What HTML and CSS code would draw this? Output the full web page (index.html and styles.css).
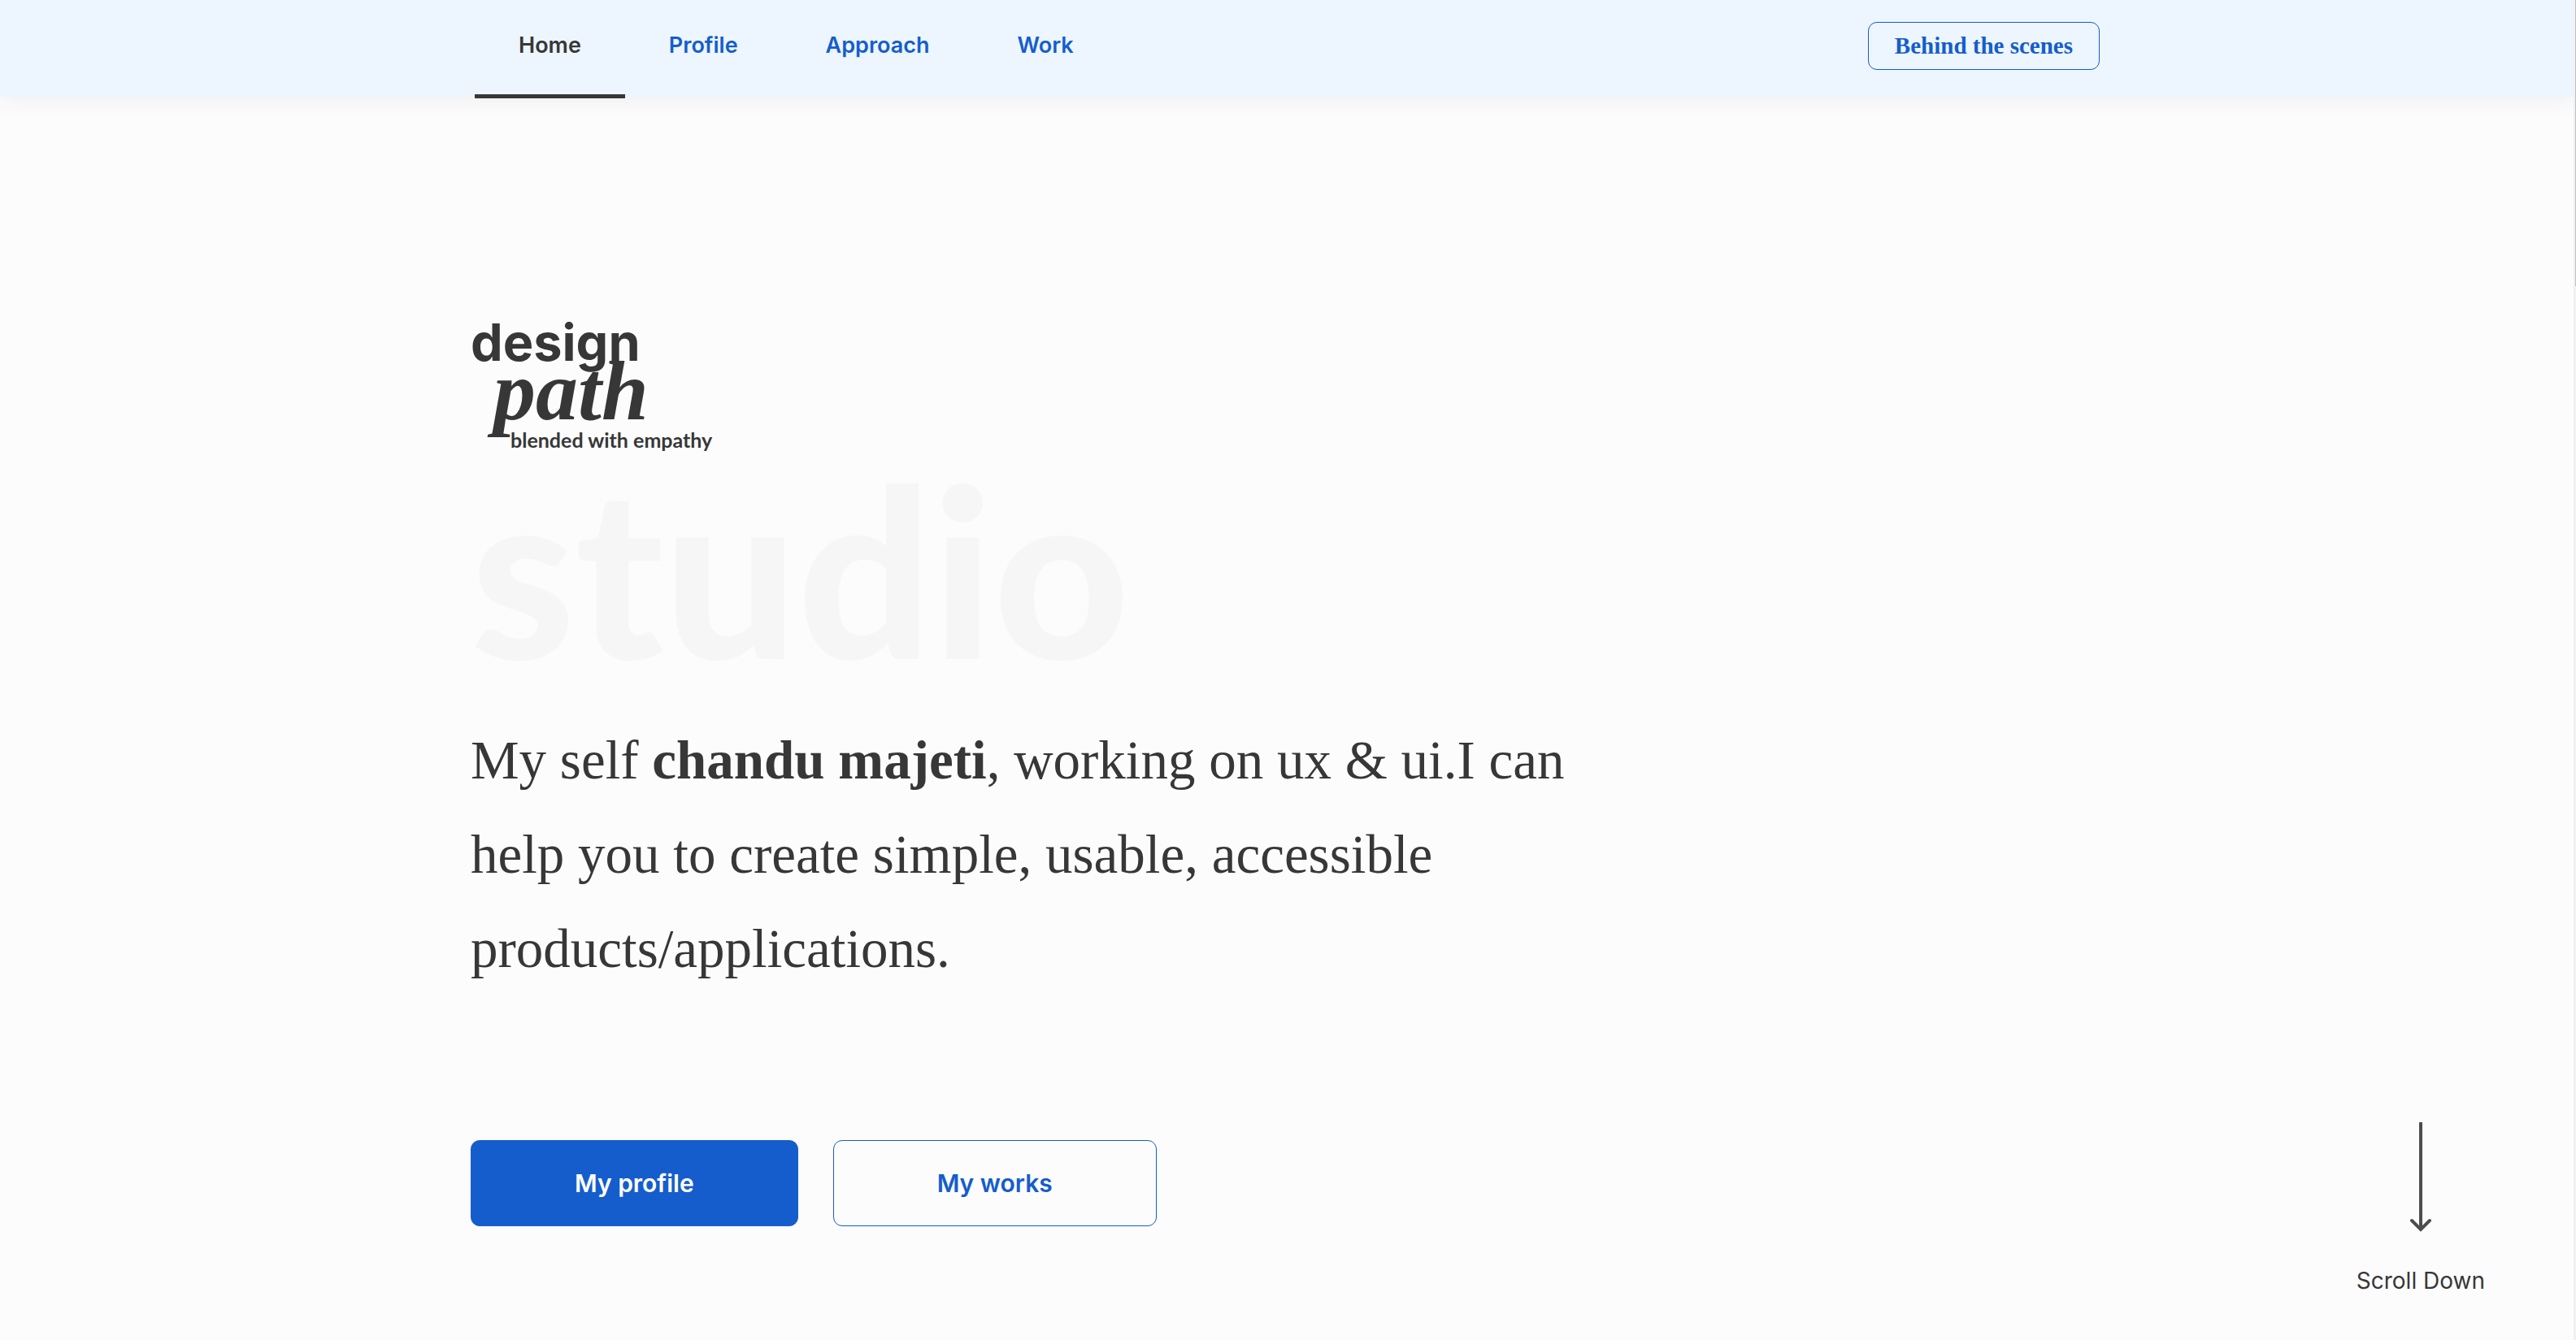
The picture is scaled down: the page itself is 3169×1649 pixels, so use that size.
FILE: index.html
```html
<!DOCTYPE html>
<html lang="en">
<head>
<meta charset="utf-8">
<meta name="viewport" content="width=device-width, initial-scale=1">
<title>Design path studio</title>
<link rel="stylesheet" href="styles.css">
</head>
<body>
<header class="site-header">
  <div class="header-inner">
    <nav class="nav" aria-label="Main">
      <a class="nav-link active" href="#home" aria-current="page">Home</a>
      <a class="nav-link" href="#profile">Profile</a>
      <a class="nav-link" href="#approach">Approach</a>
      <a class="nav-link" href="#work">Work</a>
    </nav>
    <button class="btn-scenes" type="button">Behind the scenes</button>
  </div>
</header>
<main class="hero" id="home">
  <div class="hero-content">
    <svg class="logo" viewBox="0 0 304 176" role="img" aria-label="design path, blended with empathy">
      <text class="logo-design" x="0" y="59">design</text>
      <text class="logo-path" x="28" y="131">path</text>
      <text class="logo-tag" x="49" y="166">blended with empathy</text>
    </svg>
    <div class="studio">studio</div>
    <p class="intro">My self <strong>chandu majeti</strong>, working on ux &amp; ui.I can help you to create simple, usable, accessible products/applications.</p>
    <div class="actions">
      <a class="btn btn-primary" href="#profile">My profile</a>
      <a class="btn btn-outline" href="#work">My works</a>
    </div>
  </div>
  <a class="scroll-down" href="#profile">
    <svg class="arrow" viewBox="0 0 28 136" aria-hidden="true"><path d="M14 1V132M3 121L14 132L25 121"/></svg>
    <span>Scroll Down</span>
  </a>
</main>
<div class="scroll-track" aria-hidden="true"><div class="scroll-thumb"></div></div>
</body>
</html>
```
FILE: styles.css
```css
* { box-sizing: border-box; }

body {
  margin: 0;
  padding-right: 3px;
  background: #fcfcfc;
  color: #373737;
  font-family: Inter, "Liberation Sans", sans-serif;
  font-size: 27px;
}

a { text-decoration: none; }

.site-header {
  height: 119px;
  padding-right: 4px;
  background: #edf5ff;
  box-shadow: 0 4px 28px rgba(0, 0, 0, 0.06);
}

.header-inner {
  display: flex;
  justify-content: space-between;
  align-items: flex-start;
  max-width: 2004px;
  height: 100%;
  margin: 0 auto;
}

.nav {
  display: flex;
  margin-left: 5px;
}

.nav-link {
  height: 121px;
  padding: 39px 54px 0;
  border-bottom: 5px solid transparent;
  color: #155dcc;
  line-height: 34px;
  font-weight: 600;
}

.nav-link.active {
  color: #373737;
  border-bottom-color: #373737;
}

.btn-scenes {
  height: 59px;
  margin-top: 27px;
  padding: 0 32px;
  border: 1px solid #155dcc;
  border-radius: 11px;
  background: transparent;
  color: #155dcc;
  font: bold 29px "Liberation Serif", serif;
}

.hero {
  display: grid;
  grid-template-columns: 1fr minmax(0, 2004px) 1fr;
  min-height: calc(100vh - 119px);
  padding-right: 4px;
}

.hero-content {
  grid-column: 2;
  padding: 266px 0 140px;
}

.logo {
  display: block;
  width: 304px;
  height: 176px;
  overflow: visible;
  fill: #373737;
}

.logo-design { font: 700 63px Inter, sans-serif; }
.logo-path { font: italic bold 104px "Liberation Serif", serif; }
.logo-tag { font: 700 25px Lato, sans-serif; }

.studio {
  height: 276px;
  color: #f6f6f6;
  font: 900 290px/276px Lato, sans-serif;
}

.intro {
  max-width: 1400px;
  margin: 40px 0 0;
  font: 67px/116px "Liberation Serif", serif;
}

.actions {
  display: flex;
  gap: 43px;
  margin-top: 178px;
}

.btn {
  padding: 0 127px;
  border: 1px solid #155dcc;
  border-radius: 11px;
  font-size: 30px;
  line-height: 104px;
  font-weight: 600;
}

.btn-primary { background: #155dcc; color: #fff; }
.btn-outline { color: #155dcc; }

.scroll-down {
  grid-column: 3;
  place-self: end;
  display: flex;
  flex-direction: column;
  align-items: center;
  gap: 41px;
  margin: 0 105px 55px 0;
  color: #373737;
  font-size: 28px;
  line-height: 36px;
}

.arrow {
  width: 28px;
  height: 136px;
  fill: none;
  stroke: #4d4d4d;
  stroke-width: 4;
  stroke-linecap: round;
}

.scroll-track {
  position: fixed;
  top: 0;
  right: 0;
  bottom: 0;
  width: 3px;
  padding-left: 2px;
  background: #f1f1f1;
}

.scroll-thumb {
  height: 352px;
  background: #c1c1c1;
}
```
